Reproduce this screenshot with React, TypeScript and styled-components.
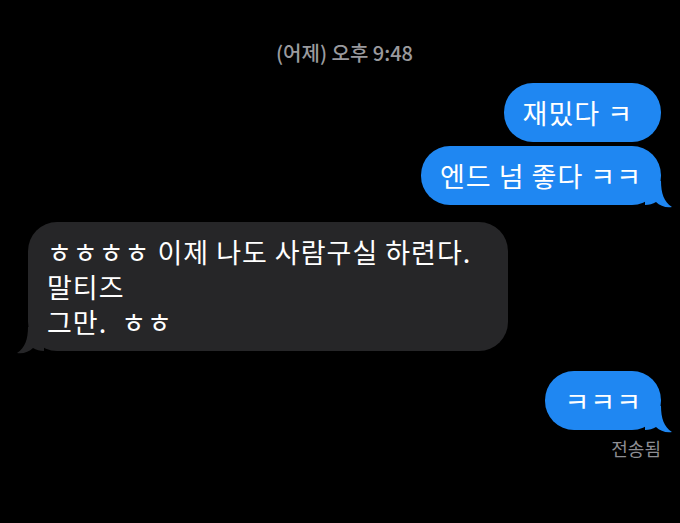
import React from 'react';
import styled, { createGlobalStyle } from 'styled-components';

const GlobalStyle = createGlobalStyle`
  html, body {
    margin: 0;
    padding: 0;
    background: #000;
  }
  body {
    font-family: "Noto Sans CJK KR", "Noto Sans", sans-serif;
  }
`;

const Screen = styled.div`
  width: 680px;
  height: 523px;
  background: #000;
  display: flex;
  flex-direction: column;
  padding: 42px 19px 0 28px;
  box-sizing: border-box;
  overflow: hidden;
`;

const Timestamp = styled.div`
  align-self: center;
  font-size: 20px;
  line-height: 22px;
  font-weight: 500;
  color: #9a9a9e;
`;

const Row = styled.div<{ $side: 'left' | 'right'; $top: number }>`
  display: flex;
  justify-content: ${({ $side }) => ($side === 'right' ? 'flex-end' : 'flex-start')};
  margin-top: ${({ $top }) => $top}px;
`;

const Bubble = styled.div<{ $me?: boolean; $padRight?: number }>`
  position: relative;
  padding: 12px ${({ $padRight }) => $padRight ?? 19}px 12px 19px;
  border-radius: 29px;
  background: ${({ $me }) => ($me ? '#1f87f2' : '#262628')};
  color: #fff;
  font-size: 27px;
  line-height: 35px;
  letter-spacing: 1px;
  white-space: pre-wrap;
`;

const TailSvg = styled.svg<{ $me?: boolean }>`
  position: absolute;
  bottom: -3px;
  width: 28px;
  height: 27px;
  ${({ $me }) => ($me ? 'right: -12px;' : 'left: -12px; transform: scaleX(-1);')}
`;

const Status = styled.div`
  align-self: flex-end;
  margin-top: 8px;
  font-size: 18px;
  line-height: 20px;
  color: #8e8e93;
`;

function Tail({ me }: { me?: boolean }) {
  return (
    <TailSvg $me={me} viewBox="0 0 28 27">
      <path
        d="M16 0 C16 12 19 21 27 26 C21 27 15 25 11 21 C8 23 4 24 0 24 L0 0 Z"
        fill={me ? '#1f87f2' : '#262628'}
      />
    </TailSvg>
  );
}

export default function App() {
  return (
    <>
      <GlobalStyle />
      <Screen>
        <Timestamp>(어제) 오후 9:48</Timestamp>
        <Row $side="right" $top={19}>
          <Bubble $me $padRight={28}>재밌다 ㅋ</Bubble>
        </Row>
        <Row $side="right" $top={4}>
          <Bubble $me>
            엔드 넘 좋다 ㅋㅋ
            <Tail me />
          </Bubble>
        </Row>
        <Row $side="left" $top={17}>
          <Bubble $padRight={37}>
            {'ㅎㅎㅎㅎ 이제 나도 사람구실 하련다.\n말티즈\n그만.  ㅎㅎ'}
            <Tail />
          </Bubble>
        </Row>
        <Row $side="right" $top={20}>
          <Bubble $me>
            ㅋㅋㅋ
            <Tail me />
          </Bubble>
        </Row>
        <Status>전송됨</Status>
      </Screen>
    </>
  );
}
